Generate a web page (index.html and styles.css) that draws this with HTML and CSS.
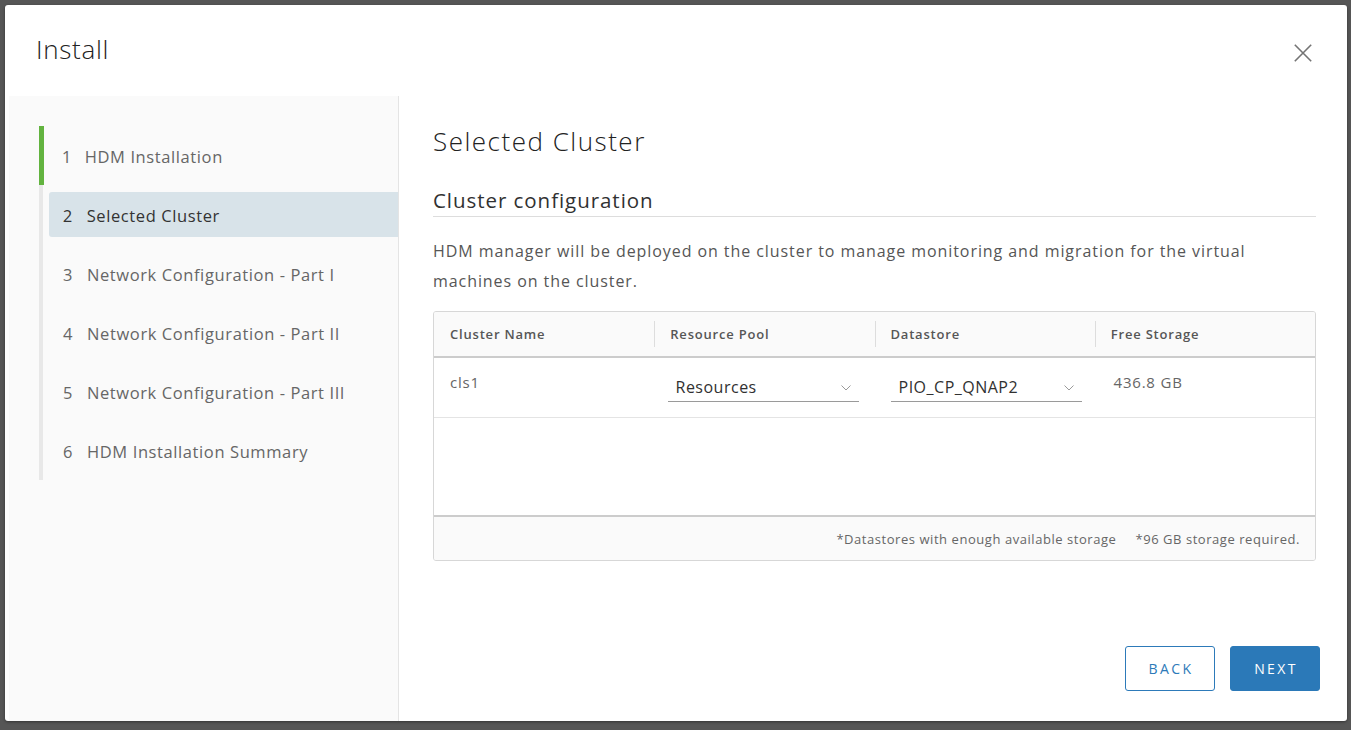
FILE: index.html
```html
<!DOCTYPE html>
<html>
<head>
<meta charset="utf-8">
<link rel="stylesheet" href="styles.css">
</head>
<body>
<div class="modal">
  <div class="modal-header">
    <h1 class="modal-title">Install</h1>
    <button class="close" aria-label="Close">
      <svg width="18" height="18" viewBox="0 0 18 18"><path d="M0.8 0.8 L17.2 17.2 M17.2 0.8 L0.8 17.2" stroke="#747474" stroke-width="1.6" fill="none"/></svg>
    </button>
  </div>
  <div class="modal-body">
    <nav class="steps">
      <div class="step done"><span class="step-box"><span class="num">1</span>HDM Installation</span></div>
      <div class="step current"><span class="step-box"><span class="num">2</span>Selected Cluster</span></div>
      <div class="step"><span class="step-box"><span class="num">3</span>Network Configuration - Part I</span></div>
      <div class="step"><span class="step-box"><span class="num">4</span>Network Configuration - Part II</span></div>
      <div class="step"><span class="step-box"><span class="num">5</span>Network Configuration - Part III</span></div>
      <div class="step"><span class="step-box"><span class="num">6</span>HDM Installation Summary</span></div>
    </nav>
    <main class="content">
      <h2 class="page-title">Selected Cluster</h2>
      <h3 class="section-title">Cluster configuration</h3>
      <p class="desc">HDM manager will be deployed on the cluster to manage monitoring and migration for the virtual machines on the cluster.</p>
      <div class="grid">
        <div class="grid-head">
          <div class="th">Cluster Name</div>
          <div class="th"><span class="sep"></span>Resource Pool</div>
          <div class="th"><span class="sep"></span>Datastore</div>
          <div class="th"><span class="sep"></span>Free Storage</div>
        </div>
        <div class="grid-row">
          <div class="td">cls1</div>
          <div class="td"><div class="select">Resources<svg class="chev" width="10" height="6" viewBox="0 0 10 6"><path d="M0.5 0.5 L5 5 L9.5 0.5" stroke="#9a9a9a" stroke-width="1" fill="none"/></svg></div></div>
          <div class="td"><div class="select">PIO_CP_QNAP2<svg class="chev" width="10" height="6" viewBox="0 0 10 6"><path d="M0.5 0.5 L5 5 L9.5 0.5" stroke="#9a9a9a" stroke-width="1" fill="none"/></svg></div></div>
          <div class="td">436.8 GB</div>
        </div>
        <div class="grid-empty"></div>
        <div class="grid-foot">
          <span>*Datastores with enough available storage</span>
          <span>*96 GB storage required.</span>
        </div>
      </div>
      <div class="actions">
        <button class="btn btn-outline">BACK</button>
        <button class="btn btn-primary">NEXT</button>
      </div>
    </main>
  </div>
</div>
</body>
</html>
```

FILE: styles.css
```css
* { box-sizing: border-box; }
html, body { margin: 0; padding: 0; }
body {
  background: #565656;
  font-family: "Open Sans", Lato, sans-serif;
  color: #565656;
  width: 1351px;
  height: 730px;
  overflow: hidden;
  padding: 5px 4px 9px 5px;
}
.modal {
  width: 1342px;
  height: 716px;
  background: #fff;
  border-radius: 3px;
  display: flex;
  flex-direction: column;
  box-shadow: 0 1px 3px rgba(0,0,0,0.4);
}
.modal-header {
  height: 91px;
  flex: none;
  display: flex;
  align-items: center;
  justify-content: space-between;
  padding: 0 35px 0 31px;
}
.modal-title {
  margin: 0;
  font-size: 26px;
  font-weight: 300;
  letter-spacing: 0.7px;
  color: #222;
  padding-bottom: 4px;
}
.close {
  border: 0;
  background: none;
  padding: 0;
  margin-top: 4px;
  width: 18px;
  height: 18px;
  cursor: pointer;
}
.close svg { display: block; }
.modal-body {
  flex: 1;
  display: flex;
  padding-left: 4px;
  min-height: 0;
}
.steps {
  width: 390px;
  flex: none;
  background: #fafafa;
  border-right: 1px solid #e4e4e4;
  padding: 30px 0 0 30px;
}
.step {
  height: 59px;
  border-left: 4px solid #e8e8e8;
  display: flex;
  align-items: center;
  padding-left: 6px;
}
.step.done { border-left: 5px solid #62b33f; padding-left: 5px; }
.step-box {
  flex: 1;
  height: 45px;
  display: flex;
  align-items: center;
  padding: 2px 0 0 14px;
  font-size: 16.5px;
  letter-spacing: 0.6px;
  color: #666;
  border-radius: 3px 0 0 3px;
}
.step.current .step-box {
  background: #d8e3e9;
  color: #333;
}
.num {
  font-variant-numeric: proportional-nums;
  margin-right: 14px;
}
.content {
  flex: 1;
  padding: 0 31px 0 34px;
  display: flex;
  flex-direction: column;
}
.page-title {
  margin: 28px 0 0;
  font-size: 26px;
  font-weight: 300;
  letter-spacing: 1.5px;
  color: #222;
  line-height: 34px;
}
.section-title {
  margin: 28px 0 0;
  font-size: 20.5px;
  font-weight: 400;
  letter-spacing: 0.95px;
  color: #313131;
  line-height: 28px;
  padding-bottom: 2px;
  border-bottom: 1px solid #dddddd;
}
.desc {
  margin: 19px 0 0;
  font-size: 16px;
  letter-spacing: 0.93px;
  line-height: 30px;
  color: #565656;
}
.grid {
  margin-top: 15px;
  border: 1px solid #d7d7d7;
  border-radius: 3px;
  overflow: hidden;
}
.grid-head, .grid-row {
  display: grid;
  grid-template-columns: repeat(4, 1fr);
}
.grid-head {
  height: 46px;
  background: #fafafa;
  border-bottom: 2px solid #cccccc;
}
.th {
  position: relative;
  display: flex;
  align-items: center;
  padding-left: 16px;
  font-size: 13px;
  font-weight: 600;
  letter-spacing: 0.8px;
  color: #565656;
}
.sep {
  position: absolute;
  left: 0;
  top: 9px;
  bottom: 9px;
  border-left: 1px solid #dddddd;
}
.grid-row {
  height: 60px;
  border-bottom: 1px solid #e4e4e4;
}
.td {
  padding: 14px 16px 0 16px;
  font-size: 15px;
  letter-spacing: 0.8px;
  color: #666;
}
.select {
  margin-top: 4px;
  width: 191px;
  height: 26px;
  border-bottom: 1px solid #9a9a9a;
  display: flex;
  align-items: center;
  justify-content: space-between;
  padding: 0 8px 3px 8px;
  color: #313131;
  font-size: 16px;
  letter-spacing: 0.5px;
}
.chev { margin-top: 2px; }
.grid-empty {
  height: 99px;
  border-bottom: 2px solid #cccccc;
}
.grid-foot {
  height: 43px;
  background: #fafafa;
  display: flex;
  justify-content: flex-end;
  align-items: center;
  gap: 19px;
  padding-right: 15px;
  font-size: 13px;
  letter-spacing: 0.55px;
  color: #666;
}
.actions {
  margin-top: auto;
  margin-bottom: 30px;
  display: flex;
  justify-content: flex-end;
  gap: 15px;
  margin-right: -4px;
}
.btn {
  width: 90px;
  height: 45px;
  border-radius: 3px;
  font-family: inherit;
  font-size: 14px;
  letter-spacing: 2.4px;
  font-weight: 500;
  cursor: pointer;
  padding: 0 0 0 2px;
}
.btn-outline {
  background: #fff;
  border: 1px solid #2d7ab9;
  color: #2d7ab9;
}
.btn-primary {
  background: #2b79b8;
  border: 1px solid #2b79b8;
  color: #fff;
}
```
